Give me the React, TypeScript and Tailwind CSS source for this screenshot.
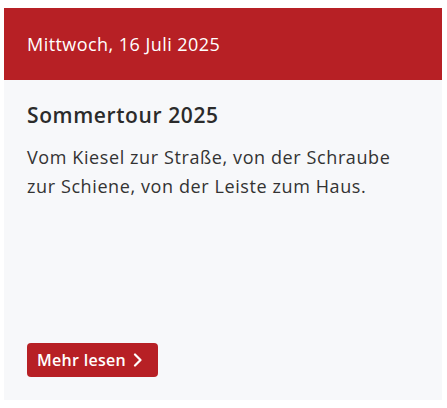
export default function App() {
  const font = { fontFamily: '"Open Sans", "Noto Sans", sans-serif' };
  return (
    <div className="min-h-screen bg-white pt-2 px-1" style={font}>
      <div className="w-[438px] h-[392px] flex flex-col bg-[#f7f8fa]">
        <div className="h-[72px] bg-[#b72025] flex items-center px-[23px]">
          <span className="text-white text-[18px] tracking-[0.45px]">Mittwoch, 16 Juli 2025</span>
        </div>
        <div className="flex-1 flex flex-col px-[23px] pt-[21px] pb-[23px]">
          <h2 className="text-[21px] font-semibold text-[#2b2b2b] leading-7 tracking-[0.6px]">Sommertour 2025</h2>
          <p className="mt-[14px] max-w-[380px] text-[18px] leading-[29px] tracking-[0.6px] text-[#333]">
            Vom Kiesel zur Straße, von der Schraube zur Schiene, von der Leiste zum Haus.
          </p>
          <div className="mt-auto">
            <a
              href="#"
              className="inline-flex items-center gap-[7px] h-[34px] pl-[10px] pr-[15px] rounded-[4px] bg-[#b72025] text-white text-[16px] font-semibold tracking-[0.3px]"
            >
              Mehr lesen
              <svg width="10" height="14" viewBox="0 0 10 14" fill="none">
                <path d="M2 1.5L7.5 7L2 12.5" stroke="white" strokeWidth="2.2" strokeLinecap="round" strokeLinejoin="round" />
              </svg>
            </a>
          </div>
        </div>
      </div>
    </div>
  );
}
